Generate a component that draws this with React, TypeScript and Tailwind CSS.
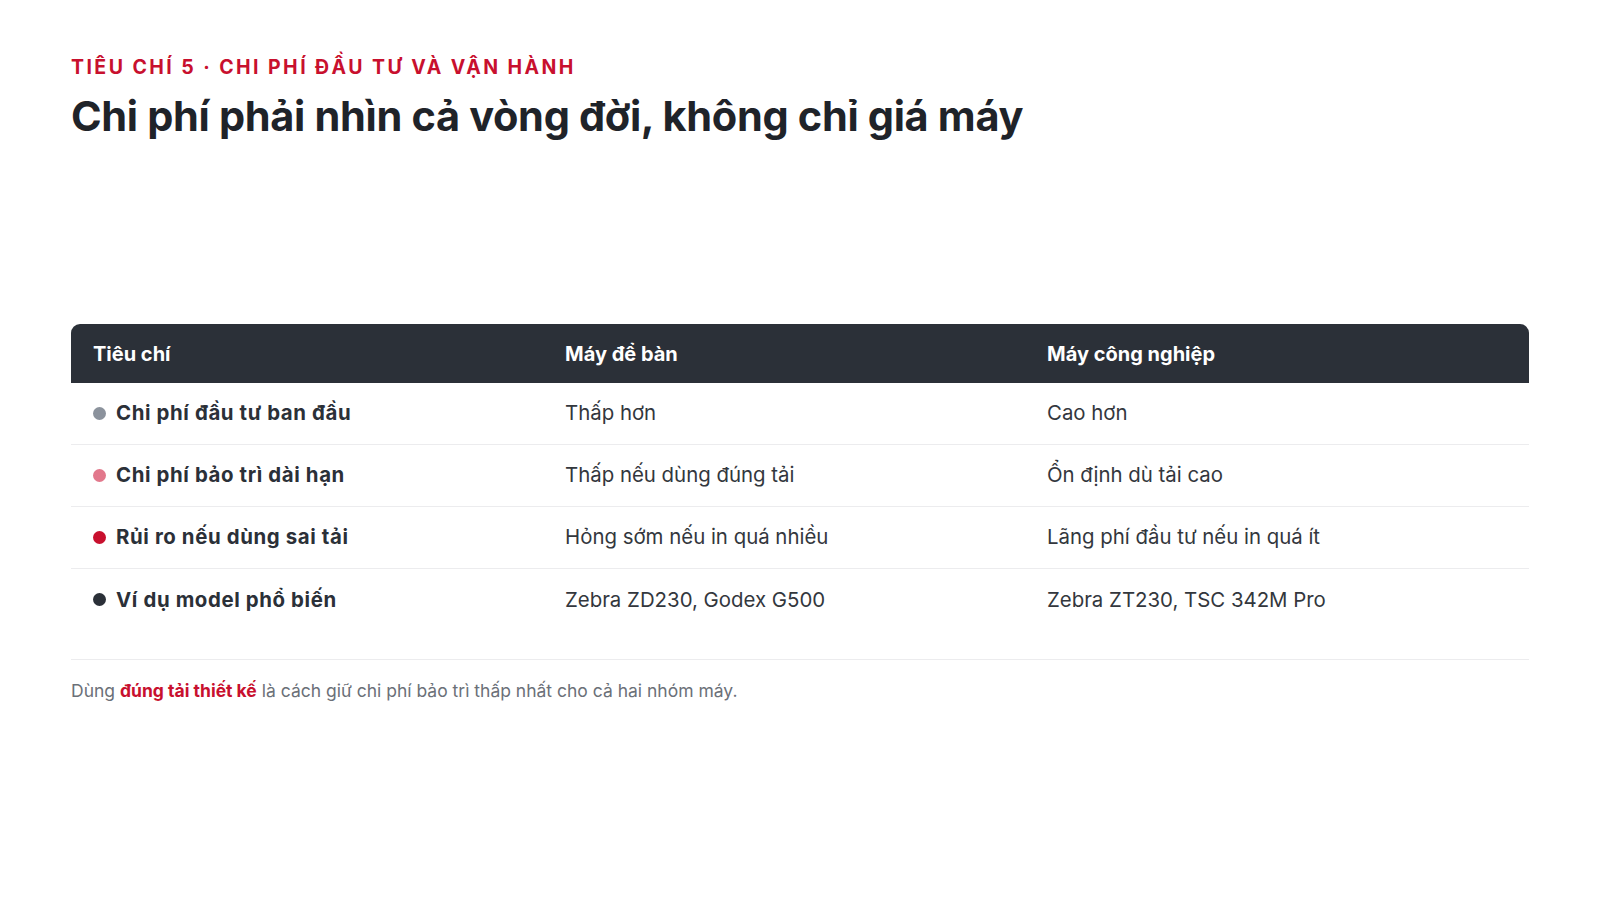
import React from "react";

const rows = [
  { dot: "bg-[#8b929c]", label: "Chi phí đầu tư ban đầu", a: "Thấp hơn", b: "Cao hơn" },
  { dot: "bg-[#e2788c]", label: "Chi phí bảo trì dài hạn", a: "Thấp nếu dùng đúng tải", b: "Ổn định dù tải cao" },
  { dot: "bg-[#c8102e]", label: "Rủi ro nếu dùng sai tải", a: "Hỏng sớm nếu in quá nhiều", b: "Lãng phí đầu tư nếu in quá ít" },
  { dot: "bg-[#2b3038]", label: "Ví dụ model phổ biến", a: "Zebra ZD230, Godex G500", b: "Zebra ZT230, TSC 342M Pro" },
];

export default function App() {
  return (
    <div
      className="w-[1600px] h-[900px] bg-white px-[71px] pt-[55px] text-[#2b3038]"
      style={{ fontFamily: "Inter, 'Noto Sans', sans-serif" }}
    >
      <div className="text-[19.5px] font-bold tracking-[0.125em] text-[#c8102e] leading-[24px]">
        TIÊU CHÍ 5 · CHI PHÍ ĐẦU TƯ VÀ VẬN HÀNH
      </div>
      <h1 className="mt-[12px] text-[41.5px] font-bold leading-[50px] tracking-[-0.008em] text-[#1f2329]">
        Chi phí phải nhìn cả vòng đời, không chỉ giá máy
      </h1>

      <div className="mt-[183px]">
        <div className="grid grid-cols-[472px_482px_1fr] h-[59px] items-center bg-[#2b3038] rounded-t-[9px] text-white text-[20px] font-bold">
          <div className="pl-[22px]">Tiêu chí</div>
          <div className="pl-[22px]">Máy để bàn</div>
          <div className="pl-[22px]">Máy công nghiệp</div>
        </div>
        {rows.map((r, i) => (
          <div
            key={i}
            className={`grid grid-cols-[472px_482px_1fr] h-[62px] items-center text-[20.4px] ${
              i < rows.length - 1 ? "border-b border-[#ececee]" : ""
            }`}
          >
            <div className="pl-[22px] flex items-center gap-[10px] font-bold text-[#2b3038] tracking-[0.03em]">
              <span className={`w-[13px] h-[13px] shrink-0 rounded-full ${r.dot}`} />
              <span>{r.label}</span>
            </div>
            <div className="pl-[22px] text-[#33373d]">{r.a}</div>
            <div className="pl-[22px] text-[#33373d]">{r.b}</div>
          </div>
        ))}
      </div>

      <div className="mt-[28px] border-t border-[#ececee] pt-[19px] text-[17.5px] text-[#6b7078] leading-[24px]">
        Dùng <span className="font-bold text-[#c8102e]">đúng tải thiết kế</span> là cách giữ chi phí bảo trì thấp nhất cho cả hai nhóm máy.
      </div>
    </div>
  );
}
